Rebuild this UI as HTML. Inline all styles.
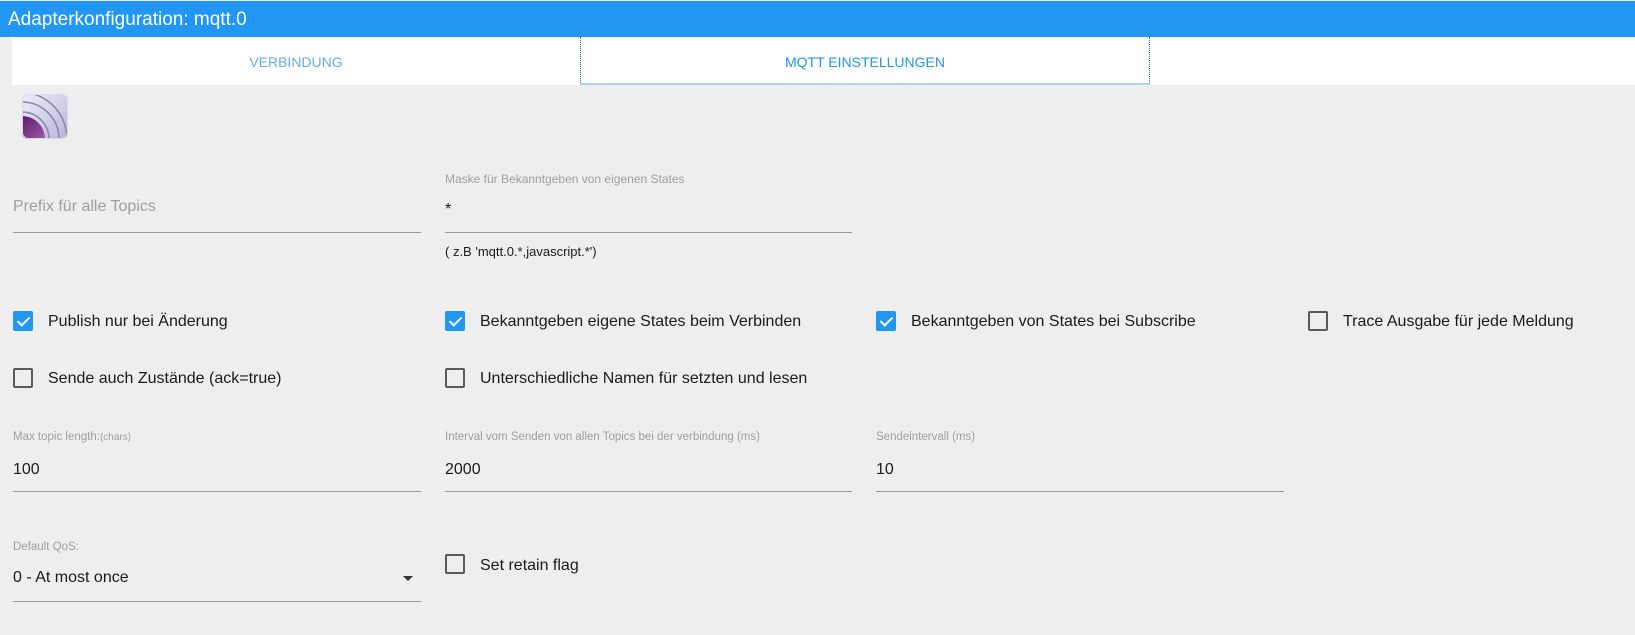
<!DOCTYPE html>
<html><head><meta charset="utf-8"><style>
*{margin:0;padding:0;box-sizing:border-box}
body{width:1635px;height:635px;background:#eeeeee;font-family:"Liberation Sans",sans-serif;position:relative;overflow:hidden;color:#1a1a1a}
.hdr{position:absolute;left:0;top:1px;width:1635px;height:36px;background:#2196f3;color:#fff;font-size:19px;line-height:38px;padding-left:8px}
.tabs{position:absolute;left:12px;top:37px;width:1623px;height:48px;background:#fff}
.tab{position:absolute;top:0;height:48px;line-height:50px;text-align:center;font-size:14px;color:#64aee8}
.t1{left:0;width:568px}
.t2{left:568px;width:570px;color:#2196f3;border-left:1px dotted #1976d2;border-right:1px dotted #1976d2;border-bottom:2px solid #aad4f5}
.a{position:absolute;white-space:nowrap}
.lbl{font-size:11.5px;color:#9e9e9e}
.val{font-size:16px;color:#1a1a1a}
.ul{position:absolute;height:1px;background:#9a9a9a}
.cb{position:absolute;width:20px;height:20px;border:2px solid #5a5a5a;border-radius:2px}
.cb.on{background:#2196f3;border-color:#2196f3}
.cb.on::after{content:"";position:absolute;left:5px;top:1px;width:5px;height:10px;border:solid #fff;border-width:0 2px 2px 0;transform:rotate(45deg)}
.ct{font-size:16px;color:#1a1a1a}
</style></head><body>
<div class="hdr">Adapterkonfiguration: mqtt.0</div>
<div class="tabs"><div class="tab t1">VERBINDUNG</div><div class="tab t2">MQTT EINSTELLUNGEN</div></div>
<svg class="a" style="left:22px;top:94px" width="46" height="45" viewBox="0 0 46 45">
<defs><linearGradient id="g" x1="0" y1="0" x2="1" y2="1"><stop offset="0" stop-color="#eeeef8"/><stop offset="1" stop-color="#b8b6d8"/></linearGradient>
<linearGradient id="p" x1="0" y1="0" x2="1" y2="1"><stop offset="0" stop-color="#5a1a6a"/><stop offset="1" stop-color="#a05aa8"/></linearGradient>
<clipPath id="c"><rect x="0" y="0" width="46" height="45" rx="6"/></clipPath></defs>
<g clip-path="url(#c)"><rect width="46" height="45" fill="url(#g)"/>
<path d="M0 18 A27 27 0 0 1 27 45" fill="none" stroke="#8884b0" stroke-width="1.5"/>
<path d="M0 8 A37 37 0 0 1 37 45" fill="none" stroke="#8884b0" stroke-width="1.5"/>
<path d="M0 -2 A47 47 0 0 1 45 45" fill="none" stroke="#8884b0" stroke-width="1.5"/>
<path d="M0 22 A23 23 0 0 1 23 45 L0 45Z" fill="url(#p)"/></g>
<rect x="0.5" y="0.5" width="45" height="44" rx="6" fill="none" stroke="#ddd6ef"/></svg>

<div class="a val" style="left:13px;top:198px;color:#9e9e9e">Prefix für alle Topics</div>
<div class="ul" style="left:13px;top:232px;width:408px"></div>
<div class="a lbl" style="left:445px;top:172px;font-size:12px">Maske für Bekanntgeben von eigenen States</div>
<div class="a val" style="left:445px;top:201px">*</div>
<div class="ul" style="left:445px;top:232px;width:407px"></div>
<div class="a" style="left:445px;top:244px;font-size:13px">( z.B 'mqtt.0.*,javascript.*')</div>

<div class="cb on" style="left:13px;top:311px"></div><div class="a ct" style="left:48px;top:313px">Publish nur bei Änderung</div>
<div class="cb on" style="left:445px;top:311px"></div><div class="a ct" style="left:480px;top:313px">Bekanntgeben eigene States beim Verbinden</div>
<div class="cb on" style="left:876px;top:311px"></div><div class="a ct" style="left:911px;top:313px">Bekanntgeben von States bei Subscribe</div>
<div class="cb" style="left:1308px;top:311px"></div><div class="a ct" style="left:1343px;top:313px">Trace Ausgabe für jede Meldung</div>
<div class="cb" style="left:13px;top:368px"></div><div class="a ct" style="left:48px;top:370px">Sende auch Zustände (ack=true)</div>
<div class="cb" style="left:445px;top:368px"></div><div class="a ct" style="left:480px;top:370px">Unterschiedliche Namen für setzten und lesen</div>

<div class="a lbl" style="left:13px;top:431px">Max topic length:<span style="font-size:10px">(chars)</span></div>
<div class="a val" style="left:13px;top:461px">100</div>
<div class="ul" style="left:13px;top:491px;width:408px"></div>
<div class="a lbl" style="left:445px;top:431px">Interval vom Senden von allen Topics bei der verbindung (ms)</div>
<div class="a val" style="left:445px;top:461px">2000</div>
<div class="ul" style="left:445px;top:491px;width:407px"></div>
<div class="a lbl" style="left:876px;top:431px">Sendeintervall (ms)</div>
<div class="a val" style="left:876px;top:461px">10</div>
<div class="ul" style="left:876px;top:491px;width:408px"></div>

<div class="a lbl" style="left:13px;top:541px">Default QoS:</div>
<div class="a val" style="left:13px;top:569px">0 - At most once</div>
<div class="a" style="left:403px;top:576px;width:0;height:0;border-left:5px solid transparent;border-right:5px solid transparent;border-top:5px solid #333"></div>
<div class="ul" style="left:13px;top:601px;width:408px"></div>
<div class="cb" style="left:445px;top:554px"></div><div class="a ct" style="left:480px;top:557px">Set retain flag</div>
</body></html>
